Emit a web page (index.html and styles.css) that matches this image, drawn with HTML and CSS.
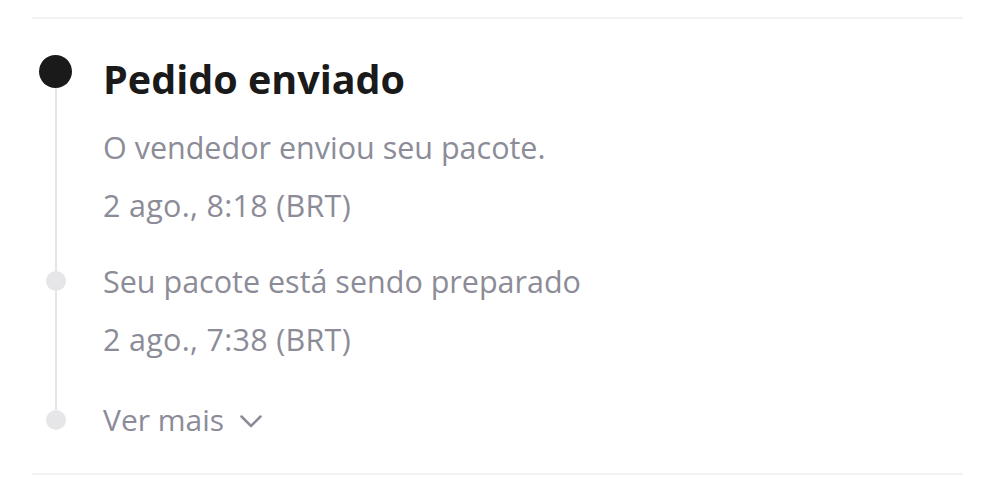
FILE: index.html
```html
<!DOCTYPE html>
<html lang="pt-BR">

<head>
    <meta charset="UTF-8">
    <meta name="viewport" content="width=device-width, initial-scale=1.0">
    <title>Rastreamento do pedido</title>
    <link rel="stylesheet" href="styles.css">
</head>

<body>
    <section class="tracking">
        <ul class="timeline">
            <li class="step step-current">
                <div class="marker">
                    <span class="seg seg-top"></span>
                    <span class="dot"></span>
                    <span class="seg seg-bottom"></span>
                </div>
                <div class="content">
                    <h2 class="step-title">Pedido enviado</h2>
                    <p class="step-text">O vendedor enviou seu pacote.</p>
                    <p class="step-text">2 ago., 8:18 (BRT)</p>
                </div>
            </li>
            <li class="step">
                <div class="marker">
                    <span class="seg seg-top"></span>
                    <span class="dot"></span>
                    <span class="seg seg-bottom"></span>
                </div>
                <div class="content">
                    <p class="step-text">Seu pacote está sendo preparado</p>
                    <p class="step-text">2 ago., 7:38 (BRT)</p>
                </div>
            </li>
            <li class="step">
                <div class="marker">
                    <span class="seg seg-top"></span>
                    <span class="dot"></span>
                    <span class="seg seg-bottom"></span>
                </div>
                <div class="content">
                    <a class="more" href="#">Ver mais
                        <svg class="chevron" width="22" height="13" viewBox="0 0 22 13">
                            <path d="M1.5 1.5 L11 11 L20.5 1.5" fill="none" stroke="currentColor" stroke-width="2.5" stroke-linecap="round" stroke-linejoin="round" />
                        </svg>
                    </a>
                </div>
            </li>
        </ul>
    </section>
</body>

</html>
```

FILE: styles.css
```css
body {
    margin: 0;
    background: #ffffff;
    font-family: "Open Sans", Lato, sans-serif;
}

.tracking {
    margin: 0 31px 0 32px;
    padding: 17px 0 24px;
}

.timeline {
    list-style: none;
    margin: 0;
    padding: 0;
    border-top: 2px solid #f2f2f2;
    border-bottom: 2px solid #f2f2f2;
    padding-top: 36px;
    padding-bottom: 24px;
}

.step {
    display: grid;
    grid-template-columns: 47px 1fr;
    column-gap: 24px;
}

.marker {
    display: flex;
    flex-direction: column;
    align-items: center;
}

.seg {
    width: 2px;
    background: #e4e4e6;
}

.seg-top {
    height: 19px;
}

.seg-bottom {
    flex: 1;
}

.step:first-child .seg-top {
    display: none;
}

.step:last-child .seg-bottom {
    visibility: hidden;
}

.dot {
    width: 20px;
    height: 20px;
    border-radius: 50%;
    background: #e6e6e8;
    flex-shrink: 0;
}

.step-current .dot {
    width: 33px;
    height: 33px;
    background: #1a1a1a;
}

.content {
    padding-bottom: 18px;
}

.step:nth-child(2) .content {
    padding-bottom: 23px;
}

.step:last-child .content {
    padding-bottom: 0;
}

.step-title {
    margin: -2px 0 13px;
    font-size: 39.5px;
    line-height: 52px;
    font-weight: 700;
    color: #1a1a1a;
}

.step-text {
    margin: 0;
    font-size: 30.5px;
    line-height: 58px;
    color: #8c8c98;
}

.step-text + .step-text {
    letter-spacing: 0.3px;
}

.more {
    display: inline-flex;
    align-items: center;
    gap: 16px;
    font-size: 30px;
    line-height: 58px;
    color: #8c8c98;
    text-decoration: none;
}

.chevron {
    margin-top: 2px;
}
```
